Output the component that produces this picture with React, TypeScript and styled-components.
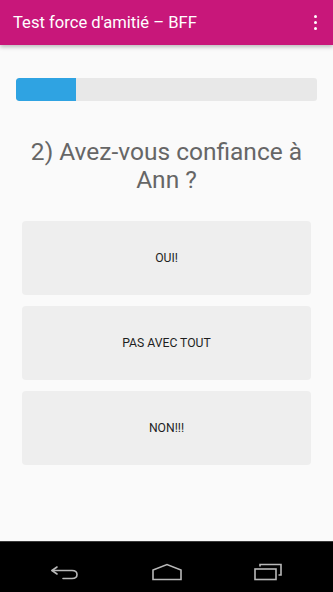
import React from "react";
import styled, { createGlobalStyle } from "styled-components";

const Global = createGlobalStyle`
  html, body { margin: 0; padding: 0; }
  body { background: #fafafa; font-family: Roboto, "Noto Sans", sans-serif; }
  * { box-sizing: border-box; }
`;

const Screen = styled.div`
  width: 333px;
  height: 592px;
  display: flex;
  flex-direction: column;
  background: #fafafa;
  overflow: hidden;
`;

const AppBar = styled.header`
  height: 45px;
  flex: none;
  background: #c8177a;
  display: flex;
  align-items: center;
  justify-content: space-between;
  padding: 0 13px 0 13px;
  box-shadow: 0 2px 4px rgba(0, 0, 0, 0.25);
  position: relative;
  z-index: 1;
`;

const Title = styled.h1`
  margin: 0;
  font-family: Roboto, sans-serif;
  font-weight: 400;
  font-size: 16.6px;
  color: #ffffff;
  letter-spacing: 0;
`;

const Kebab = styled.div`
  display: flex;
  flex-direction: column;
  gap: 2.5px;
  padding: 0 3px;
`;

const Dot = styled.span`
  width: 3.5px;
  height: 3.5px;
  border-radius: 50%;
  background: #fff;
`;

const Content = styled.main`
  flex: 1;
  display: flex;
  flex-direction: column;
  padding: 33px 16px 0 16px;
`;

const Track = styled.div`
  height: 23px;
  border-radius: 3px;
  background: #e8e8e8;
  overflow: hidden;
`;

const Fill = styled.div`
  height: 100%;
  background: #2fa3e2;
  border-radius: 3px 0 0 3px;
`;

const Question = styled.h2`
  margin: 37px 0 0 0;
  font-family: Roboto, sans-serif;
  font-weight: 400;
  font-size: 24.5px;
  line-height: 28px;
  color: #666666;
  text-align: center;
  padding: 0 8px;
`;

const Answers = styled.div`
  display: flex;
  flex-direction: column;
  gap: 11px;
  margin: 27px 6px 0 6px;
`;

const Answer = styled.button`
  height: 74px;
  border: none;
  border-radius: 4px;
  background: #eeeeee;
  font-family: Roboto, sans-serif;
  font-size: 12.2px;
  color: #1e1e1e;
  text-transform: uppercase;
  display: flex;
  align-items: center;
  justify-content: center;
  padding: 0;
`;

const NavBar = styled.nav`
  height: 51px;
  flex: none;
  background: #000;
  border-top: 1px solid #3a3a3a;
  display: flex;
  align-items: center;
  justify-content: center;
  gap: 70.5px;
  padding: 9px 0 0 0;
`;

const NavIcon = styled.svg`
  width: 32px;
  height: 18px;
  stroke: #b8b8b8;
  fill: none;
  stroke-width: 1.6;
`;

export default function App() {
  const progress = 20;
  return (
    <>
      <Global />
      <Screen>
        <AppBar>
          <Title>Test force d'amitié – BFF</Title>
          <Kebab>
            <Dot />
            <Dot />
            <Dot />
          </Kebab>
        </AppBar>
        <Content>
          <Track>
            <Fill style={{ width: `${progress}%` }} />
          </Track>
          <Question>2) Avez-vous confiance à Ann ?</Question>
          <Answers>
            <Answer>Oui!</Answer>
            <Answer>Pas avec tout</Answer>
            <Answer>Non!!!</Answer>
          </Answers>
        </Content>
        <NavBar>
          <NavIcon viewBox="0 0 32 18">
            <path d="M9 4 L4 7.5 L9 11" strokeLinecap="round" strokeLinejoin="round" />
            <path d="M4 7.5 H24 Q29 7.5 29 11.5 Q29 15.5 24 15.5 H15" strokeLinecap="round" />
          </NavIcon>
          <NavIcon viewBox="0 0 32 18">
            <path d="M2 16.5 V7 L16 1.5 L30 7 V16.5 Z" strokeLinejoin="miter" />
          </NavIcon>
          <NavIcon viewBox="0 0 32 18">
            <rect x="2" y="6" width="21" height="10.5" />
            <path d="M7 3.5 V1.5 H28 V12 H25.5" />
          </NavIcon>
        </NavBar>
      </Screen>
    </>
  );
}
